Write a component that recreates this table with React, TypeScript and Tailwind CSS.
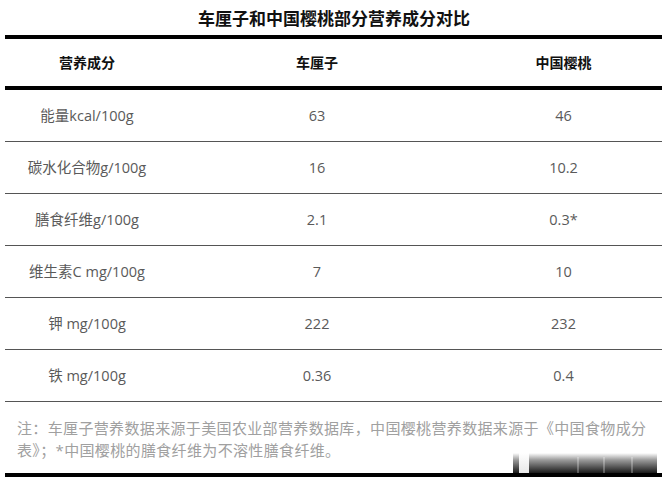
import React from 'react';

const rows = [
    { name: '能量kcal/100g', a: '63', b: '46' },
    { name: '碳水化合物g/100g', a: '16', b: '10.2' },
    { name: '膳食纤维g/100g', a: '2.1', b: '0.3*' },
    { name: '维生素C mg/100g', a: '7', b: '10' },
    { name: '钾 mg/100g', a: '222', b: '232' },
    { name: '铁 mg/100g', a: '0.36', b: '0.4' },
];

const font = { fontFamily: '"Open Sans", "Noto Sans CJK SC", sans-serif' };

const App: React.FC = () => {
    return (
        <div className="w-[668px] h-[483px] bg-white relative overflow-hidden" style={font}>
            <div className="h-[35px] flex items-center justify-center text-[17px] font-bold text-[#111] pt-[3px]">
                车厘子和中国樱桃部分营养成分对比
            </div>

            <div className="ml-[5px] w-[657px]">
                <div className="border-t-4 border-b-4 border-black h-[55px] grid grid-cols-[164px_296px_197px] items-center text-[14px] font-bold text-[#111]">
                    <div className="text-center">营养成分</div>
                    <div className="text-center">车厘子</div>
                    <div className="text-center">中国樱桃</div>
                </div>

                {rows.map((row) => (
                    <div key={row.name} className="h-[52px] border-b border-[#555] grid grid-cols-[164px_296px_197px] items-center text-[14.5px] text-[#5a5a5a] pt-[1px]">
                        <div className="text-center">{row.name}</div>
                        <div className="text-center">{row.a}</div>
                        <div className="text-center">{row.b}</div>
                    </div>
                ))}

                <div className="h-[71px] pl-[12px] pr-[4px] pt-[15px] text-[15px] leading-[22px] text-[#a0a0a0] tracking-[0.35px]">
                    注：车厘子营养数据来源于美国农业部营养数据库，中国樱桃营养数据来源于《中国食物成分表》；*中国樱桃的膳食纤维为不溶性膳食纤维。
                </div>
                <div className="h-[4px] bg-black"></div>
            </div>

            {/* blurred watermark strip at the bottom right */}
            <div className="absolute left-[513px] top-[453px] w-[144px] h-[20px] bg-[linear-gradient(to_bottom,#ffffff,#9a9a9a_35%,#1a1a1a)]">
                <div className="absolute left-[6px] top-0 w-[10px] h-[20px] bg-[linear-gradient(to_bottom,#ffffff,#e8e8e8)]"></div>
                <div className="absolute left-[64px] top-[4px] w-[2px] h-[16px] bg-[#ffffff44]"></div>
                <div className="absolute left-[90px] top-[4px] w-[2px] h-[16px] bg-[#ffffff44]"></div>
                <div className="absolute left-[118px] top-[4px] w-[2px] h-[16px] bg-[#ffffff44]"></div>
            </div>
        </div>
    );
};

export default App;
